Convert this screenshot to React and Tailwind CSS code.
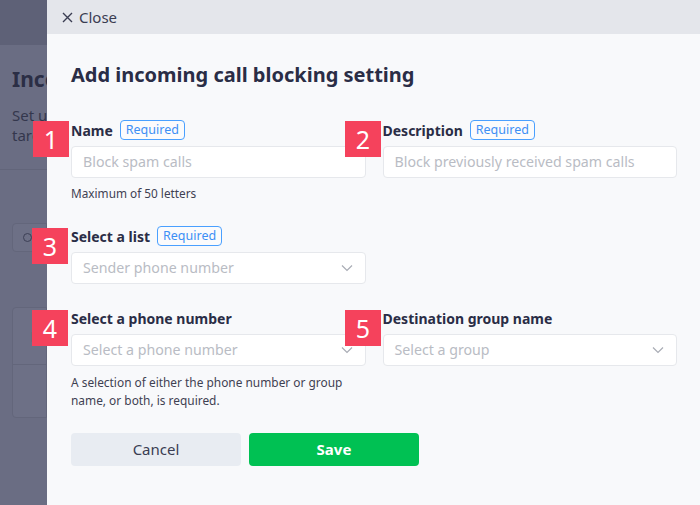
function Badge({ n, className }) {
  return (
    <div
      className={`absolute w-[36px] h-[36px] bg-[#f5425c] text-white text-[25px] flex items-center justify-center leading-none ${className}`}
    >
      {n}
    </div>
  );
}

function Required() {
  return (
    <span className="h-[20px] px-[5px] flex items-center rounded-[4px] border border-[#4aa0ff] text-[#3d8ff5] text-[12.5px] font-normal bg-white/40">
      Required
    </span>
  );
}

function Label({ text, required }) {
  return (
    <div className="h-[20px] flex items-center gap-[7px] mb-[6px]">
      <span className="text-[14px] font-bold text-[#2a2d46]">{text}</span>
      {required && <Required />}
    </div>
  );
}

function Chevron() {
  return (
    <svg width="12" height="8" viewBox="0 0 12 8" className="text-[#a9acb5]">
      <path d="M1 1.5 L6 6.5 L11 1.5" fill="none" stroke="currentColor" strokeWidth="1.2" />
    </svg>
  );
}

function Field({ placeholder, select }) {
  return (
    <div className="h-[32px] bg-white border border-[#e6e8ec] rounded-[4px] flex items-center justify-between pl-[11px] pr-[12px] text-[14.2px] text-[#b9bcc4]">
      <span>{placeholder}</span>
      {select && <Chevron />}
    </div>
  );
}

export default function App() {
  return (
    <div className="w-[700px] h-[505px] flex overflow-hidden relative font-['Noto_Sans',sans-serif]">
      {/* page behind the drawer, dimmed */}
      <div className="w-[47px] shrink-0 bg-[#6a6d83] flex flex-col overflow-hidden">
        <div className="h-[45px] bg-[#5e6177]" />
        <div className="pl-[12px] pt-[20px] whitespace-nowrap">
          <div className="text-[21px] font-bold text-[#2b2e45] leading-[28px]">Incoming</div>
          <div className="text-[15px] text-[#34374d] leading-[20px] mt-[12px]">Set up</div>
          <div className="text-[15px] text-[#34374d] leading-[20px]">target</div>
        </div>
        <div className="h-px bg-[#62657a] mt-[24px]" />
        <div className="ml-[12px] mt-[53px] h-[29px] bg-[#6d7086] border border-[#63667b] rounded-l-[4px] flex items-center pl-[10px]">
          <span className="w-[9px] h-[9px] rounded-full border border-[#3c3f55]" />
        </div>
        <div className="ml-[12px] mt-[55px] h-[111px] bg-[#6d7086] border border-[#63667b] rounded-l-[4px] flex flex-col">
          <div className="h-[56px] flex items-center pl-[18px] text-[14px] font-bold text-[#2b2e45]">N</div>
          <div className="h-px bg-[#63667b]" />
        </div>
      </div>

      {/* drawer */}
      <div className="flex-1 bg-[#f8f9fb] flex flex-col">
        <div className="h-[34px] bg-[#e4e6eb] flex items-center pl-[15px] gap-[6px] text-[15px] text-[#3a3d52]">
          <svg width="11" height="11" viewBox="0 0 11 11">
            <path d="M1 1 L10 10 M10 1 L1 10" stroke="currentColor" strokeWidth="1.4" />
          </svg>
          <span>Close</span>
        </div>
        <div className="pl-[24px] pr-[23px] pt-[27px]">
          <h1 className="text-[20px] font-bold text-[#2a2d46] leading-[28px]">
            Add incoming call blocking setting
          </h1>

          <div className="grid grid-cols-2 gap-x-[17px] mt-[31px]">
            <div>
              <Label text="Name" required />
              <Field placeholder="Block spam calls" />
              <div className="mt-[6px] text-[11.8px] leading-[18px] text-[#3f4152]">Maximum of 50 letters</div>
            </div>
            <div>
              <Label text="Description" required />
              <Field placeholder="Block previously received spam calls" />
            </div>

            <div className="mt-[24px]">
              <Label text="Select a list" required />
              <Field placeholder="Sender phone number" select />
            </div>
            <div />

            <div className="mt-[24px]">
              <Label text="Select a phone number" />
              <Field placeholder="Select a phone number" select />
              <div className="mt-[7px] text-[11.9px] leading-[18px] text-[#3f4152]">
                A selection of either the phone number or group name, or both, is required.
              </div>
            </div>
            <div className="mt-[24px]">
              <Label text="Destination group name" />
              <Field placeholder="Select a group" select />
            </div>
          </div>

          <div className="flex gap-[8px] mt-[24px]">
            <button className="w-[170px] h-[33px] rounded-[4px] bg-[#e8ecf2] text-[15px] text-[#3a3d52]">
              Cancel
            </button>
            <button className="w-[170px] h-[33px] rounded-[4px] bg-[#00c153] text-[15px] font-bold text-white">
              Save
            </button>
          </div>
        </div>
      </div>

      <Badge n="1" className="left-[33px] top-[121px]" />
      <Badge n="2" className="left-[345px] top-[121px]" />
      <Badge n="3" className="left-[32px] top-[228px]" />
      <Badge n="4" className="left-[32px] top-[310px]" />
      <Badge n="5" className="left-[345px] top-[310px]" />
    </div>
  );
}
